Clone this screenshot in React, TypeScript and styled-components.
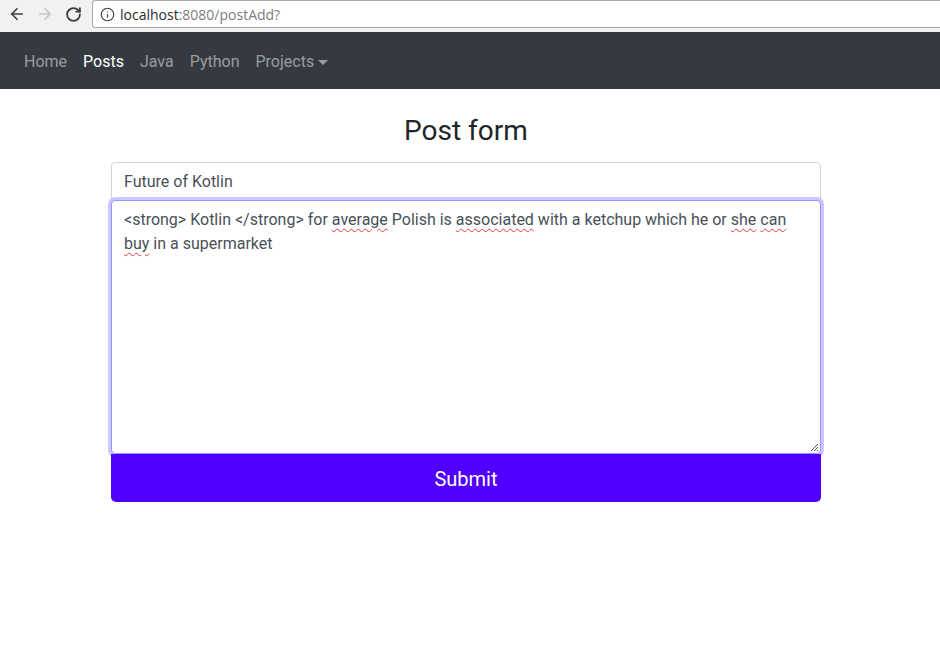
import React from "react";
import styled, { createGlobalStyle } from "styled-components";
import { ArrowLeft, ArrowRight, RotateCw, Info } from "lucide-react";

const Global = createGlobalStyle`
  html, body { margin: 0; padding: 0; background: #fff; }
  body { font-family: Roboto, "Noto Sans", sans-serif; }
  * { box-sizing: border-box; }
`;

const Chrome = styled.div`
  height: 32px;
  background: #f2f1f0;
  display: flex;
  align-items: flex-start;
  padding-left: 3px;
`;

const NavBtn = styled.div<{ $dim?: boolean }>`
  width: 28px;
  height: 28px;
  display: flex;
  align-items: center;
  justify-content: center;
  color: ${(p) => (p.$dim ? "#c4c4c4" : "#3c3c3c")};
`;

const Address = styled.div`
  flex: 1;
  height: 28px;
  margin-left: 5px;
  background: #fff;
  border: 1px solid #a9a9a9;
  border-right: none;
  border-radius: 3px 0 0 3px;
  display: flex;
  align-items: center;
  padding-left: 7px;
  font-family: "Open Sans", "DejaVu Sans", sans-serif;
  font-size: 14px;
  gap: 5px;
  color: #3c3c3c;
`;

const Host = styled.span`
  color: #2b2b2b;
`;
const Rest = styled.span`
  color: #7d7d7d;
`;

const Navbar = styled.nav`
  background: #343a40;
  height: 57px;
  display: flex;
  align-items: center;
  padding: 2px 16px 0;
`;

const NavLink = styled.a<{ $active?: boolean }>`
  font-size: 16px;
  line-height: 24px;
  padding: 8px;
  color: ${(p) => (p.$active ? "#fff" : "rgba(255,255,255,0.5)")};
  text-decoration: none;
  display: flex;
  align-items: center;
`;

const Caret = styled.span`
  display: inline-block;
  margin-left: 4px;
  width: 0;
  height: 0;
  border-left: 5px solid transparent;
  border-right: 5px solid transparent;
  border-top: 5px solid currentColor;
  margin-top: 1px;
`;

const Main = styled.main`
  width: 710px;
  margin-left: 111px;
  display: flex;
  flex-direction: column;
`;

const Title = styled.h3`
  margin: 25px 0 14px;
  font-size: 28px;
  font-weight: 400;
  line-height: 1.2;
  text-align: center;
  color: #212529;
`;

const TextInput = styled.div`
  height: 38px;
  border: 1px solid #ced4da;
  border-radius: 4px 4px 0 0;
  padding: 7px 12px 5px;
  font-size: 16px;
  line-height: 24px;
  color: #495057;
`;

const TextArea = styled.div`
  position: relative;
  height: 254px;
  border: 1px solid #8a9aff;
  border-radius: 4px;
  box-shadow: 0 0 0 3px #cfc6ff;
  padding: 7px 12px 6px;
  font-size: 16px;
  line-height: 24px;
  color: #495057;
  background: #fff;
  z-index: 1;
`;

const Misspelled = styled.span`
  text-decoration: underline wavy #e53935;
  text-decoration-thickness: 1px;
  text-underline-offset: 3px;
`;

const Grip = styled.svg`
  position: absolute;
  right: 1px;
  bottom: 1px;
`;

const Submit = styled.button`
  height: 48px;
  border: none;
  border-radius: 0 0 5px 5px;
  background: #4f00ff;
  color: #fff;
  font-family: Roboto, "Noto Sans", sans-serif;
  font-size: 20px;
  line-height: 30px;
  padding: 9px 16px 7px;
  position: relative;
  z-index: 2;
`;

export default function App() {
  return (
    <>
      <Global />
      <Chrome>
        <NavBtn><ArrowLeft size={18} strokeWidth={2.2} /></NavBtn>
        <NavBtn $dim><ArrowRight size={18} strokeWidth={2.2} /></NavBtn>
        <NavBtn><RotateCw size={17} strokeWidth={2.6} /></NavBtn>
        <Address>
          <Info size={15} strokeWidth={1.8} />
          <span>
            <Host>localhost</Host>
            <Rest>:8080/postAdd?</Rest>
          </span>
        </Address>
      </Chrome>
      <Navbar>
        <NavLink>Home</NavLink>
        <NavLink $active>Posts</NavLink>
        <NavLink>Java</NavLink>
        <NavLink>Python</NavLink>
        <NavLink>
          Projects<Caret />
        </NavLink>
      </Navbar>
      <Main>
        <Title>Post form</Title>
        <TextInput>Future of Kotlin</TextInput>
        <TextArea>
          {"<strong> Kotlin </strong> for "}
          <Misspelled>average</Misspelled>
          {" Polish is "}
          <Misspelled>associated</Misspelled>
          {" with a ketchup which he or "}
          <Misspelled>she</Misspelled> <Misspelled>can</Misspelled>{" "}
          <Misspelled>buy</Misspelled>
          {" in a supermarket"}
          <Grip width="9" height="9" viewBox="0 0 9 9">
            <path d="M1 8 L8 1 M4 8 L8 4 M7 8 L8 7" stroke="#555" strokeWidth="1" />
          </Grip>
        </TextArea>
        <Submit>Submit</Submit>
      </Main>
    </>
  );
}
